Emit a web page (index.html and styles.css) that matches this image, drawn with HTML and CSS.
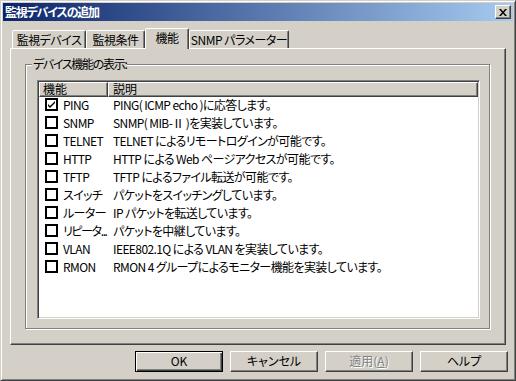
FILE: index.html
```html
<!DOCTYPE html>
<html lang="ja">
<head>
  <meta charset="UTF-8" />
  <title>監視デバイスの追加</title>
  <link rel="stylesheet" href="styles.css">
</head>
<body>

  <div class="window">
    <div class="titlebar">
      <span class="title">監視デバイスの追加</span>
      <div class="close">
        <svg width="8" height="7" viewBox="0 0 8 7"><path d="M0 0h2l2 2.5L6 0h2L5 3.5 8 7H6L4 4.5 2 7H0l3-3.5z" fill="#000"/></svg>
      </div>
    </div>

    <div class="content">
      <div class="tabs">
        <div class="tab tab-1">監視デバイス</div>
        <div class="tab tab-2">監視条件</div>
        <div class="tab tab-3 active">機能</div>
        <div class="tab tab-4">SNMP パラメーター</div>
      </div>

      <div class="panel">
        <div class="group">
          <span class="group-label">デバイス機能の表示:</span>

          <div class="listview">
            <div class="lv-header">
              <div class="hcell hcell-name">機能</div>
              <div class="hcell hcell-desc">説明</div>
            </div>

            <div class="row">
              <div class="cell-name"><span class="check checked"><svg width="9" height="9" viewBox="0 0 9 9"><path d="M1 4l2 2 5-5v2L3 8 1 6z" fill="#000"/></svg></span><span class="name">PING</span></div>
              <div class="cell-desc">PING( ICMP echo )に応答します。</div>
            </div>
            <div class="row">
              <div class="cell-name"><span class="check"></span><span class="name">SNMP</span></div>
              <div class="cell-desc">SNMP( MIB-Ⅱ )を実装しています。</div>
            </div>
            <div class="row">
              <div class="cell-name"><span class="check"></span><span class="name">TELNET</span></div>
              <div class="cell-desc">TELNET によるリモートログインが可能です。</div>
            </div>
            <div class="row">
              <div class="cell-name"><span class="check"></span><span class="name">HTTP</span></div>
              <div class="cell-desc">HTTP による Web ページアクセスが可能です。</div>
            </div>
            <div class="row">
              <div class="cell-name"><span class="check"></span><span class="name">TFTP</span></div>
              <div class="cell-desc">TFTP によるファイル転送が可能です。</div>
            </div>
            <div class="row">
              <div class="cell-name"><span class="check"></span><span class="name">スイッチ</span></div>
              <div class="cell-desc">パケットをスイッチングしています。</div>
            </div>
            <div class="row">
              <div class="cell-name"><span class="check"></span><span class="name">ルーター</span></div>
              <div class="cell-desc">IP パケットを転送しています。</div>
            </div>
            <div class="row">
              <div class="cell-name"><span class="check"></span><span class="name tight">リピータ...</span></div>
              <div class="cell-desc">パケットを中継しています。</div>
            </div>
            <div class="row">
              <div class="cell-name"><span class="check"></span><span class="name">VLAN</span></div>
              <div class="cell-desc">IEEE802.1Q による VLAN を実装しています。</div>
            </div>
            <div class="row">
              <div class="cell-name"><span class="check"></span><span class="name">RMON</span></div>
              <div class="cell-desc">RMON 4 グループによるモニター機能を実装しています。</div>
            </div>
          </div>
        </div>
      </div>

      <div class="buttons">
        <div class="btn default">OK</div>
        <div class="btn">キャンセル</div>
        <div class="btn disabled">適用(<u>A</u>)</div>
        <div class="btn">ヘルプ</div>
      </div>
    </div>
  </div>

</body>
</html>
```

FILE: styles.css
```css
body {
  margin: 0;
  background: #d4d0c8;
  font-family: "Noto Sans CJK JP", sans-serif;
  font-size: 12px;
  font-feature-settings: "palt";
  color: #000;
}

.window {
  width: 516px;
  height: 381px;
  box-sizing: border-box;
  border: 1px solid;
  border-color: #d4d0c8 #404040 #404040 #d4d0c8;
  box-shadow: inset 1px 1px #fff, inset -1px -1px #808080;
  padding: 2px;
  background: #d4d0c8;
}

/* title bar */
.titlebar {
  height: 18px;
  display: flex;
  align-items: center;
  justify-content: space-between;
  padding: 0 2px;
  background: linear-gradient(to right, #0a246a, #a6caf0);
}

.title {
  color: #fff;
  font-weight: bold;
  line-height: 18px;
  letter-spacing: -1.2px;
}

.close {
  width: 16px;
  height: 14px;
  box-sizing: border-box;
  border: 1px solid;
  border-color: #fff #404040 #404040 #fff;
  box-shadow: inset -1px -1px #808080;
  background: #d4d0c8;
  display: flex;
  align-items: center;
  justify-content: center;
}

.close svg {
  display: block;
  margin-left: -1px;
}

.content {
  padding: 7px 0 0 7px;
}

/* tabs */
.tabs {
  display: flex;
  align-items: flex-end;
  height: 20px;
  padding-left: 2px;
  position: relative;
  z-index: 1;
}

.tab {
  height: 18px;
  box-sizing: border-box;
  border: 1px solid;
  border-bottom: none;
  border-color: #fff #404040 transparent #fff;
  border-radius: 2px 2px 0 0;
  box-shadow: inset -1px 0 #808080;
  text-align: center;
  line-height: 17px;
  white-space: nowrap;
  letter-spacing: -0.5px;
  background: #d4d0c8;
}

.tab-1 { width: 74px; }
.tab-2 { width: 59px; }
.tab-3 { width: 44px; }
.tab-4 { width: 100px; }

.tab.active {
  height: 21px;
  margin-bottom: -1px;
  line-height: 18px;
}

/* tab panel */
.panel {
  width: 496px;
  height: 297px;
  box-sizing: border-box;
  border: 1px solid;
  border-color: #fff #404040 #404040 #fff;
  box-shadow: inset -1px -1px #808080;
  padding: 15px 14px 14px 14px;
}

.group {
  position: relative;
  width: 465px;
  height: 265px;
  box-sizing: border-box;
  border: 1px solid #808080;
  box-shadow: inset 1px 1px #fff, 1px 1px #fff;
  padding: 15px 9px 9px 11px;
}

.group-label {
  position: absolute;
  top: -9px;
  left: 6px;
  padding: 0 1px;
  background: #d4d0c8;
  line-height: 16px;
  letter-spacing: -1.3px;
}

/* list view */
.listview {
  width: 443px;
  height: 239px;
  box-sizing: border-box;
  border: 1px solid;
  border-color: #808080 #fff #fff #808080;
  box-shadow: inset 1px 1px #404040, inset -1px -1px #d4d0c8;
  padding: 1px;
  background: #fff;
  letter-spacing: -0.6px;
}

.lv-header {
  display: flex;
  height: 15px;
}

.hcell {
  box-sizing: border-box;
  height: 15px;
  border: 1px solid;
  border-color: #fff #404040 #404040 #fff;
  box-shadow: inset -1px -1px #808080;
  background: #d4d0c8;
  line-height: 12px;
  padding-left: 3px;
  letter-spacing: 0;
}

.hcell-name { width: 69px; }
.hcell-desc { flex: 1; padding-left: 4px; }

.row {
  display: flex;
  height: 18px;
  padding-top: 1px;
  box-sizing: border-box;
  line-height: 14px;
}

.cell-name {
  width: 69px;
  display: flex;
  align-items: flex-start;
  padding-left: 6px;
  box-sizing: border-box;
  white-space: nowrap;
  flex: none;
}

.name.tight {
  letter-spacing: -1.4px;
}

.cell-desc {
  padding-left: 5px;
  white-space: nowrap;
}

.check {
  width: 13px;
  height: 13px;
  box-sizing: border-box;
  border: 2px solid #000;
  background: #fff;
  margin-right: 5px;
  flex: none;
  display: flex;
  align-items: center;
  justify-content: center;
}

.check svg {
  display: block;
}

/* dialog buttons */
.buttons {
  display: flex;
  justify-content: flex-end;
  gap: 7px;
  margin-top: 6px;
  padding-right: 5px;
}

.btn {
  width: 88px;
  height: 21px;
  box-sizing: border-box;
  border: 1px solid;
  border-color: #fff #404040 #404040 #fff;
  box-shadow: inset -1px -1px #808080;
  text-align: center;
  line-height: 18px;
}

.btn.default {
  border-color: #000;
  box-shadow: inset 1px 1px #fff, inset -1px -1px #404040, inset -2px -2px #808080;
}

.btn.disabled {
  color: #808080;
  text-shadow: 1px 1px #fff;
}
```
